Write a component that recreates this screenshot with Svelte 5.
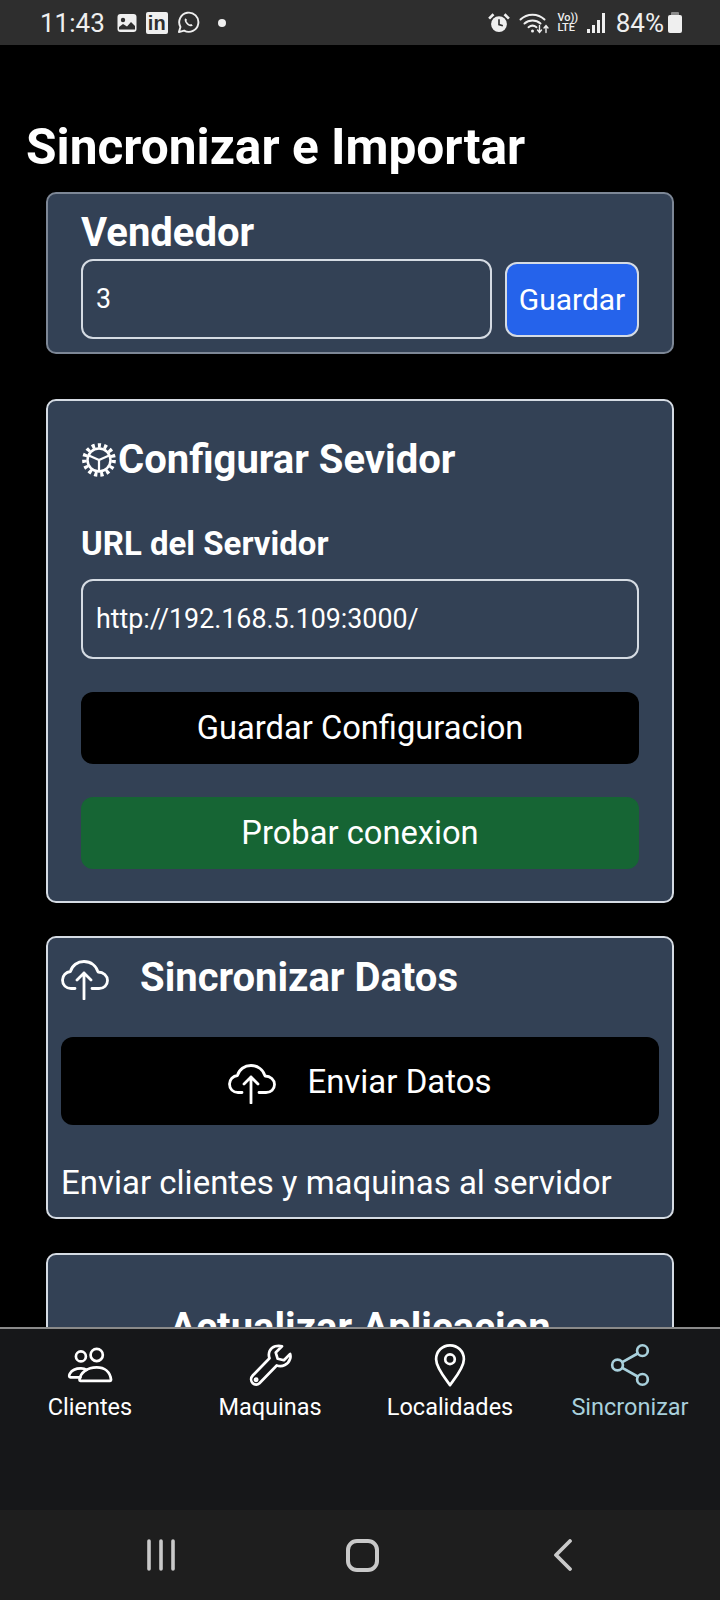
<script lang="ts">
  const tabs = [
    { id: 'clientes', label: 'Clientes' },
    { id: 'maquinas', label: 'Maquinas' },
    { id: 'localidades', label: 'Localidades' },
    { id: 'sincronizar', label: 'Sincronizar' },
  ];
  const activeTab = 'sincronizar';
</script>

{#snippet cloud()}
  <svg class="cloud" viewBox="0 0 48 40" fill="none" stroke="currentColor" stroke-width="2.8" stroke-linecap="round" stroke-linejoin="round">
    <path d="M14 28.5H10C5 28.5 1.5 25 1.5 20C1.5 15.5 5 12 9.5 11.5C11 5.5 16.5 1.5 23 1.5C30 1.5 35.5 6 37 12C42.5 12 46.5 16 46.5 20.5C46.5 25 43 28.5 38 28.5H31" />
    <path d="M23 39V13M16 20L23 13L30 20" />
  </svg>
{/snippet}

<div class="screen">
  <header class="status">
    <div class="status-left">
      <span class="clock">11:43</span>
      <svg class="ic-gallery" viewBox="0 0 20 20">
        <rect x="0.5" y="1" width="19" height="18" rx="3" fill="#efefef" />
        <circle cx="6" cy="7" r="2.2" fill="#2e2e2e" />
        <path d="M2 16.5V14L6 11L10 13.5L14 9L18 13V16.5Z" fill="#2e2e2e" />
      </svg>
      <span class="ic-linkedin">in</span>
      <svg class="ic-whatsapp" viewBox="0 0 24 24" fill="none" stroke="#efefef" stroke-width="2">
        <path d="M2 22L3.6 16.6A10 10 0 1 1 7.4 20.4Z" stroke-linejoin="round" />
        <path d="M8.5 7.5C7.5 9 8 11.5 10.2 13.8C12.5 16 15 16.5 16.5 15.5L15 13.5L13.5 14.2C12 13.5 10.5 12 9.8 10.5L10.5 9Z" fill="#efefef" stroke="none" />
      </svg>
      <span class="dot"></span>
    </div>
    <div class="status-right">
      <svg class="ic-alarm" viewBox="0 0 20 20">
        <circle cx="10" cy="11" r="7.2" fill="#efefef" />
        <path d="M10 6.5V11.5L13.5 12.5" stroke="#2e2e2e" stroke-width="1.5" fill="none" />
        <path d="M1 6L5 2M19 6L15 2" stroke="#efefef" stroke-width="2.4" />
      </svg>
      <svg class="ic-wifi" viewBox="0 0 30 22" fill="none" stroke="#efefef" stroke-width="2" stroke-linecap="round">
        <path d="M1.5 7.5C8 1 19 1 25.5 7.5M5.5 11.5C10 7.5 17 7.5 21.5 11.5M9.5 15.2C12 13.2 15 13.2 17.5 15.2" />
        <circle cx="13.5" cy="19" r="1.5" fill="#efefef" stroke="none" />
        <path d="M20.5 13.5V20M18.5 18L20.5 20.5L22.5 18M27 20.5V14M25 16L27 13.5L29 16" stroke-width="1.4" />
      </svg>
      <span class="volte"><span>Vo))</span><span>LTE</span></span>
      <span class="signal"><i></i><i></i><i></i><i></i></span>
      <span class="percent">84%</span>
      <span class="battery"></span>
    </div>
  </header>

  <main class="content">
    <h1>Sincronizar e Importar</h1>

    <section class="card vendor">
      <h2>Vendedor</h2>
      <div class="vendor-row">
        <input class="field" value="3" />
        <button class="btn-save">Guardar</button>
      </div>
    </section>

    <section class="card server">
      <h2 class="server-title">
        <svg class="gear" viewBox="0 0 32 32" fill="none" stroke="#fff">
          <circle cx="16" cy="16" r="10.2" stroke-width="2.2" />
          <circle cx="16" cy="16" r="13" stroke-width="4" stroke-dasharray="2.8 2.64" />
          <path d="M16 16L7 12M16 16L25 12M16 16V26" stroke-width="2" />
        </svg>
        Configurar Sevidor
      </h2>
      <label class="url-label" for="url">URL del Servidor</label>
      <input id="url" class="field" value="http://192.168.5.109:3000/" />
      <button class="btn-wide black">Guardar Configuracion</button>
      <button class="btn-wide green">Probar conexion</button>
    </section>

    <section class="card sync">
      <h2 class="sync-title">
        {@render cloud()}
        Sincronizar Datos
      </h2>
      <button class="btn-send">
        {@render cloud()}
        Enviar Datos
      </button>
      <p>Enviar clientes y maquinas al servidor</p>
    </section>

    <section class="card update">
      <h2>Actualizar Aplicacion</h2>
    </section>
  </main>

  <nav class="tabs">
    {#each tabs as tab (tab.id)}
      <div class="tab" class:active={tab.id === activeTab}>
        <svg viewBox="0 0 48 48" fill="none" stroke="currentColor" stroke-width="2.8" stroke-linecap="round" stroke-linejoin="round">
          {#if tab.id === 'clientes'}
            <circle cx="14.5" cy="15" r="5.2" />
            <circle cx="31" cy="13.5" r="6.4" />
            <path d="M14 37H3.5C2 37 2 35 3 33C5 29.5 9 27.5 14.5 27.5C17 27.5 19 28 20.5 29" />
            <path d="M13 39.5C14 32 21 26.5 31 26.5C39 26.5 45 31 46 39.5C46 40 45.5 40.5 45 40.5H14C13.5 40.5 13 40 13 39.5Z" />
          {:else if tab.id === 'maquinas'}
            <path d="M29.5 4.5C24 6 21.5 11.5 23.5 17L6 35C3.5 37.5 4 41 6 43C8 45 11 45 13 43L31 24.5C37 26.5 43 23.5 45 17.5C45.5 16 45.5 14 45 12.5L38.5 19L32 17.5L30 11L36.5 4.5C34 3.7 32 3.8 29.5 4.5Z" />
            <circle cx="9.5" cy="39.5" r="1.2" />
          {:else if tab.id === 'localidades'}
            <path d="M24 45C19 38 9.5 27 9.5 18C9.5 9.5 16 3.5 24 3.5C32 3.5 38.5 9.5 38.5 18C38.5 27 29 38 24 45Z" />
            <circle cx="24" cy="18" r="5" />
          {:else}
            <circle cx="37" cy="9" r="5.6" />
            <circle cx="11" cy="24" r="5.6" />
            <circle cx="37" cy="39" r="5.6" />
            <path d="M16 21L32 12M16 27L32 36" />
          {/if}
        </svg>
        <span>{tab.label}</span>
      </div>
    {/each}
  </nav>

  <footer class="system-nav">
    <svg class="recents" viewBox="0 0 30 32" fill="none" stroke="#c9c9c9" stroke-width="3.6" stroke-linecap="round">
      <path d="M3 2V30M15 2V30M27 2V30" />
    </svg>
    <span class="home"></span>
    <svg class="back" viewBox="0 0 20 32" fill="none" stroke="#c9c9c9" stroke-width="3.8" stroke-linecap="round" stroke-linejoin="round">
      <path d="M17 2L3 16L17 30" />
    </svg>
  </footer>
</div>

<style>
  :global(body) {
    margin: 0;
    background: #000;
  }

  .screen {
    width: 720px;
    height: 1600px;
    display: flex;
    flex-direction: column;
    overflow: hidden;
    font-family: Roboto, 'Noto Sans', sans-serif;
    color: #fff;
    background: #000;
  }

  .status {
    height: 45px;
    flex-shrink: 0;
    background: #2e2e2e;
    display: flex;
    justify-content: space-between;
    align-items: center;
    padding: 0 38px 0 40px;
    color: #efefef;
  }

  .status-left,
  .status-right {
    display: flex;
    align-items: center;
  }

  .clock {
    font-size: 26px;
    margin-right: 12px;
  }

  .ic-gallery {
    width: 20px;
    height: 20px;
    margin-right: 9px;
  }

  .ic-linkedin {
    width: 22px;
    height: 22px;
    background: #efefef;
    color: #2e2e2e;
    border-radius: 2px;
    font: 700 20px/23px 'Liberation Sans', sans-serif;
    text-align: center;
    margin-right: 9px;
  }

  .ic-whatsapp {
    width: 23px;
    height: 23px;
  }

  .dot {
    width: 8px;
    height: 8px;
    border-radius: 50%;
    background: #efefef;
    margin-left: 18px;
  }

  .ic-alarm {
    width: 22px;
    height: 22px;
    margin-right: 9px;
  }

  .ic-wifi {
    width: 30px;
    height: 22px;
    margin-right: 8px;
  }

  .volte {
    display: flex;
    flex-direction: column;
    font-size: 11px;
    line-height: 10px;
    font-weight: 500;
    margin-right: 9px;
  }

  .signal {
    display: flex;
    align-items: flex-end;
    gap: 2.5px;
    height: 20px;
    margin-right: 11px;
  }

  .signal i {
    width: 2.5px;
    background: #efefef;
  }

  .signal i:nth-child(1) { height: 4px; }
  .signal i:nth-child(2) { height: 8px; }
  .signal i:nth-child(3) { height: 13px; }
  .signal i:nth-child(4) { height: 20px; }

  .percent {
    font-size: 26px;
    margin-right: 4px;
  }

  .battery {
    position: relative;
    width: 14px;
    height: 18px;
    background: #efefef;
    border-radius: 2px;
    margin-top: 3px;
  }

  .battery::before {
    content: '';
    position: absolute;
    left: 3px;
    top: -3px;
    width: 8px;
    height: 3px;
    background: #8a8a8a;
    border-radius: 1px 1px 0 0;
  }

  .content {
    flex: 1;
    min-height: 0;
    overflow: hidden;
  }

  h1 {
    margin: 0;
    padding: 75px 0 0 26px;
    font-size: 49.6px;
    line-height: 54px;
    font-weight: 700;
  }

  .card {
    box-sizing: border-box;
    width: 628px;
    margin: 18px 0 0 46px;
    background: #334155;
    border: 2px solid #d5dbe3;
    border-radius: 10px;
  }

  h2 {
    margin: 0;
    font-weight: 700;
  }

  .field {
    box-sizing: border-box;
    display: block;
    width: 100%;
    height: 80px;
    padding: 0 13px;
    background: transparent;
    border: 2px solid #d5dbe3;
    border-radius: 12px;
    color: #fff;
    font: 400 26.8px Roboto, sans-serif;
    outline: none;
  }

  .vendor {
    height: 162px;
    padding: 16px 33px 0;
    border-color: #7d8796;
    margin-top: 18px;
  }

  .vendor h2 {
    font-size: 40px;
    line-height: 46px;
    margin-bottom: 3px;
  }

  .vendor-row {
    display: flex;
    align-items: center;
    gap: 13px;
  }

  .vendor-row .field {
    flex: 1;
    min-width: 0;
  }

  .btn-save {
    width: 134px;
    height: 75px;
    flex-shrink: 0;
    background: #2563eb;
    border: 2px solid #d5dbe3;
    border-radius: 12px;
    color: #fff;
    font: 400 30px Roboto, sans-serif;
    padding: 0;
  }

  .server {
    height: 504px;
    margin-top: 45px;
    padding: 33px 33px 0;
  }

  .server-title {
    display: flex;
    align-items: center;
    font-size: 40px;
    line-height: 52px;
    height: 52px;
  }

  .gear {
    width: 36px;
    height: 36px;
    margin-right: 1px;
  }

  .url-label {
    display: block;
    margin-top: 39px;
    font-size: 33px;
    line-height: 38px;
    font-weight: 700;
    margin-bottom: 16px;
  }

  .btn-wide {
    display: block;
    width: 100%;
    height: 72px;
    margin-top: 33px;
    border: none;
    border-radius: 12px;
    color: #fff;
    font: 400 32.7px Roboto, sans-serif;
    padding: 0;
  }

  .black {
    background: #000;
  }

  .green {
    background: #166534;
  }

  .sync {
    height: 283px;
    margin-top: 33px;
    padding: 0 13px;
  }

  .sync-title {
    display: flex;
    align-items: center;
    height: 79px;
    font-size: 40px;
  }

  .cloud {
    width: 48px;
    height: 40px;
    flex-shrink: 0;
    margin-right: 31px;
  }

  .sync-title .cloud {
    margin-top: 5px;
  }

  .btn-send {
    box-sizing: border-box;
    display: flex;
    align-items: center;
    justify-content: center;
    width: 100%;
    height: 88px;
    margin-top: 20px;
    background: #000;
    border: none;
    border-radius: 12px;
    color: #fff;
    font: 400 33px Roboto, sans-serif;
    padding: 0;
  }

  .btn-send .cloud {
    margin-right: 31px;
    margin-top: 5px;
  }

  .sync p {
    margin: 38px 0 0;
    font-size: 33px;
    line-height: 40px;
  }

  .update {
    height: 200px;
    margin-top: 34px;
    padding-top: 51px;
    text-align: center;
  }

  .update h2 {
    font-size: 40px;
    line-height: 44px;
  }

  .tabs {
    height: 183px;
    flex-shrink: 0;
    box-sizing: border-box;
    border-top: 2px solid #8a8a8a;
    background: #161719;
    display: grid;
    grid-template-columns: repeat(4, 180px);
    position: relative;
  }

  .tab {
    display: flex;
    flex-direction: column;
    align-items: center;
    padding-top: 13px;
    color: #fff;
    font-size: 23.5px;
    line-height: 30px;
  }

  .tab svg {
    width: 46px;
    height: 46px;
    margin-bottom: 4px;
  }

  .tab.active {
    color: #a8d0dc;
  }

  .system-nav {
    height: 90px;
    flex-shrink: 0;
    background: #1e1e1e;
    display: flex;
    align-items: center;
    position: relative;
    padding-left: 146px;
  }

  .recents {
    width: 30px;
    height: 32px;
  }

  .home {
    box-sizing: border-box;
    width: 33px;
    height: 33px;
    border: 4px solid #c9c9c9;
    border-radius: 11px;
    margin-left: 170px;
  }

  .back {
    width: 20px;
    height: 32px;
    margin-left: 174px;
  }
</style>
